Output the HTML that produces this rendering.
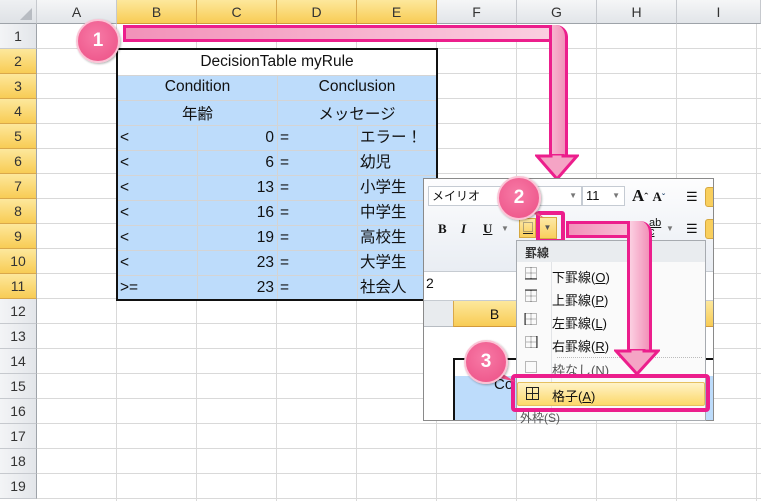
<!DOCTYPE html><html><head><meta charset="utf-8"><style>
*{margin:0;padding:0;box-sizing:border-box}
body{width:761px;height:501px;overflow:hidden;background:#fff;font-family:"Liberation Sans","Noto Sans CJK JP",sans-serif;position:relative;font-size:14px;color:#111}
.a{position:absolute}
.ch{position:absolute;top:0;height:24px;border-right:1px solid #c6c9ce;border-bottom:1px solid #9ea3a9;background:linear-gradient(#f5f6f7,#e2e5e9);text-align:center;line-height:24px;font-size:14px;color:#333}
.ch.s{background:linear-gradient(#fde89c,#f8cc55);border-right-color:#d9a84b;border-bottom-color:#d29a3c}
.rh{position:absolute;left:0;width:37px;height:25px;border-bottom:1px solid #c6c9ce;border-right:1px solid #9ea3a9;background:linear-gradient(90deg,#f3f4f6,#e3e6ea);text-align:center;line-height:24px;font-size:14px;color:#333}
.rh.s{background:linear-gradient(#fde89c,#f8cc55);border-bottom-color:#d9a84b}
.badge{position:absolute;width:44px;height:44px;border-radius:50%;background:radial-gradient(circle at 45% 40%,#f77aa6,#ec4f85);border:2px solid #fbc4d6;color:#fff;font-weight:bold;font-size:19px;text-align:center;line-height:40px;box-shadow:1px 1px 2px rgba(0,0,0,.3)}
.bar{position:absolute;background:linear-gradient(90deg,#f291b9,#fbd0e1);border:3px solid #ec1e8c}
.mi{position:absolute;left:552px;font-size:13px}
.t{font-size:15.5px}
</style></head><body>
<div class="a" style="left:37px;top:24px;width:724px;height:477px;background-image:linear-gradient(90deg,#d9d9d9 1px,transparent 1px),linear-gradient(#d9d9d9 1px,transparent 1px);background-size:80px 25px;background-position:79px 0,0 24px"></div>
<div class="ch" style="left:0;width:37px;background:linear-gradient(#eef0f2,#dfe2e6)"></div>
<div class="a" style="left:20px;top:8px;width:0;height:0;border-left:12px solid transparent;border-bottom:12px solid #b8bcc2"></div>
<div class="ch" style="left:37px;width:80px">A</div>
<div class="ch s" style="left:117px;width:80px">B</div>
<div class="ch s" style="left:197px;width:80px">C</div>
<div class="ch s" style="left:277px;width:80px">D</div>
<div class="ch s" style="left:357px;width:80px">E</div>
<div class="ch" style="left:437px;width:80px">F</div>
<div class="ch" style="left:517px;width:80px">G</div>
<div class="ch" style="left:597px;width:80px">H</div>
<div class="ch" style="left:677px;width:84px">I</div>
<div class="rh" style="top:24px">1</div><div class="rh s" style="top:49px">2</div><div class="rh s" style="top:74px">3</div><div class="rh s" style="top:99px">4</div><div class="rh s" style="top:124px">5</div><div class="rh s" style="top:149px">6</div><div class="rh s" style="top:174px">7</div><div class="rh s" style="top:199px">8</div><div class="rh s" style="top:224px">9</div><div class="rh s" style="top:249px">10</div><div class="rh s" style="top:274px">11</div><div class="rh" style="top:299px">12</div><div class="rh" style="top:324px">13</div><div class="rh" style="top:349px">14</div><div class="rh" style="top:374px">15</div><div class="rh" style="top:399px">16</div><div class="rh" style="top:424px">17</div><div class="rh" style="top:449px">18</div><div class="rh" style="top:474px">19</div>
<div class="a t" style="left:116px;top:48px;width:322px;height:253px;border:2px solid #111;background:#fff">
<div class="a" style="left:0;top:25px;width:318px;height:224px;background:#bddcfb;background-image:linear-gradient(#d4d4d4 1px,transparent 1px);background-size:100% 25px"></div>
<div class="a" style="left:159px;top:25px;width:1px;height:50px;background:#d4d4d4"></div>
<div class="a" style="left:79px;top:75px;width:1px;height:174px;background:#d4d4d4"></div>
<div class="a" style="left:159px;top:75px;width:1px;height:174px;background:#d4d4d4"></div>
<div class="a" style="left:239px;top:75px;width:1px;height:174px;background:#d4d4d4"></div>
<div class="a" style="left:0;top:3px;width:318px;text-align:center">DecisionTable myRule</div>
<div class="a" style="left:0;top:28px;width:159px;text-align:center">Condition</div>
<div class="a" style="left:160px;top:28px;width:158px;text-align:center">Conclusion</div>
<div class="a" style="left:0;top:52px;width:159px;text-align:center">年齢</div>
<div class="a" style="left:160px;top:52px;width:158px;text-align:center">メッセージ</div>
</div>
<div class="a t" style="left:120px;top:125px;line-height:25px">&lt;<br>&lt;<br>&lt;<br>&lt;<br>&lt;<br>&lt;<br>&gt;=</div>
<div class="a t" style="left:200px;top:125px;width:74px;text-align:right;line-height:25px">0<br>6<br>13<br>16<br>19<br>23<br>23</div>
<div class="a t" style="left:280px;top:125px;line-height:25px">=<br>=<br>=<br>=<br>=<br>=<br>=</div>
<div class="a t" style="left:360px;top:125px;line-height:25px">エラー！<br>幼児<br>小学生<br>中学生<br>高校生<br>大学生<br>社会人</div>
<div class="bar" style="left:123px;top:25px;width:445px;height:17px;border-radius:0 14px 0 0;border-right:none"></div>
<div class="bar" style="left:549px;top:25px;width:19px;height:134px;border-top:none;border-radius:0 12px 0 0;background:linear-gradient(90deg,#f7b4cf,#f291b9)"></div>
<svg class="a" style="left:535px;top:154px" width="44" height="28"><polygon points="2,2 16,2 16,0 28,0 28,2 42,2 22,25" fill="#f5a4c5" stroke="#ec1e8c" stroke-width="3"/></svg>
<div class="a" style="left:423px;top:178px;width:291px;height:243px;background:#fff;border:1px solid #8a8a8a;overflow:hidden">
 <div class="a" style="left:0;top:0;width:291px;height:92px;background:linear-gradient(#fdfdfe,#e9edf3)"></div>
 <div class="a" style="left:4px;top:7px;width:154px;height:20px;background:#fff;border:1px solid #c5cbd3;font-size:12px;line-height:18px;padding-left:3px">メイリオ<span style="position:absolute;right:4px;color:#777;font-size:8px">▼</span></div>
 <div class="a" style="left:158px;top:7px;width:43px;height:20px;background:#fff;border:1px solid #c5cbd3;font-size:13px;line-height:18px;padding-left:3px">11<span style="position:absolute;right:4px;color:#777;font-size:8px">▼</span></div>
 <div class="a" style="left:208px;top:7px;font-family:'Liberation Serif',serif;font-weight:bold;font-size:17px">A<span style="font-size:12px">ˆ</span> <span style="font-size:13px">A</span><span style="font-size:10px;color:#357">ˇ</span></div>
 <div class="a" style="left:14px;top:42px;font-family:'Liberation Serif',serif;font-weight:bold;font-size:13px">B</div>
 <div class="a" style="left:37px;top:42px;font-family:'Liberation Serif',serif;font-style:italic;font-weight:bold;font-size:13px">I</div>
 <div class="a" style="left:59px;top:42px;font-family:'Liberation Serif',serif;font-weight:bold;font-size:13px;text-decoration:underline">U</div>
 <div class="a" style="left:77px;top:45px;font-size:8px;color:#777">▼</div>
 <div class="a" style="left:95px;top:39px;width:17px;height:20px;background:linear-gradient(#fde9a6,#f9cf5d);border:1px solid #d6a840"></div>
 <svg class="a" style="left:98px;top:42px" width="12" height="14" fill="none" stroke="#666" stroke-dasharray="1 1"><rect x="1.5" y="1.5" width="9" height="9"/><line x1="1" y1="12.5" x2="11" y2="12.5" stroke="#222" stroke-dasharray="none"/></svg>
 <div class="a" style="left:114px;top:38px;width:19px;height:22px;background:linear-gradient(#fde9a6,#f9cf5d);border:1px solid #d6a840;font-size:8px;text-align:center;line-height:20px;color:#555">▼</div>
 <div class="a" style="left:112px;top:32px;width:29px;height:32px;border:4px solid #ec1e8c;border-radius:3px"></div>
 <div class="a" style="left:225px;top:40px;font-size:11px;line-height:9px;text-decoration:underline">ab<br>c</div><div class="a" style="left:242px;top:45px;font-size:8px;color:#777">▼</div>
 <div class="a" style="left:262px;top:10px;font-size:13px">☰</div><div class="a" style="left:262px;top:42px;font-size:13px">☰</div>
 <div class="a" style="left:281px;top:8px;width:12px;height:20px;background:#f9cf5d;border:1px solid #d6a840;border-radius:3px"></div>
 <div class="a" style="left:281px;top:40px;width:12px;height:20px;background:#f9cf5d;border:1px solid #d6a840;border-radius:3px"></div>
 <div class="a" style="left:0;top:92px;width:291px;height:30px;background:#fff;border-top:1px solid #c6cbd1;border-bottom:1px solid #c6cbd1"></div>
 <div class="a" style="left:2px;top:96px;font-size:14px">2</div>
 <div class="a" style="left:0;top:122px;width:291px;height:26px;background:#e8ebee;border-bottom:1px solid #b7bcc2"></div>
 <div class="a" style="left:29px;top:122px;width:262px;height:26px;background:linear-gradient(#fde89c,#f8cc55);border-left:1px solid #d9a84b;border-bottom:1px solid #d29a3c;text-align:center;line-height:26px;padding-right:180px">B</div>
 <div class="a" style="left:29px;top:179px;width:262px;height:70px;border:2px solid #111;border-right:none;background:#fff"></div>
 <div class="a" style="left:31px;top:197px;width:262px;height:50px;background:#bddcfb"></div>
 <div class="a" style="left:70px;top:197px;font-size:15px">Co</div>
</div>
<div class="a" style="left:516px;top:240px;width:190px;height:181px;background:#fafafa;border:1px solid #a7abb0;overflow:hidden">
 <div class="a" style="left:0;top:0;width:190px;height:21px;background:#e9ecef;font-size:12px;font-weight:bold;padding:3px 0 0 8px;color:#333">罫線</div>
 <div class="a" style="left:34px;top:21px;width:1px;height:160px;background:#e2e4e7"></div>
 <div class="a" style="left:40px;top:116px;width:145px;border-top:1px dotted #bbb"></div>
</div>
<svg class="a" style="left:524px;top:266px" width="16" height="150" fill="none" stroke="#777" stroke-dasharray="1 1">
 <rect x="1.5" y="1.5" width="11" height="11"/><line x1="1.5" y1="7" x2="12.5" y2="7"/><line x1="7" y1="1.5" x2="7" y2="12.5"/><line x1="1" y1="13" x2="13" y2="13" stroke="#222" stroke-dasharray="none"/>
 <rect x="1.5" y="24.5" width="11" height="11"/><line x1="1.5" y1="30" x2="12.5" y2="30"/><line x1="7" y1="24.5" x2="7" y2="35.5"/><line x1="1" y1="24" x2="13" y2="24" stroke="#222" stroke-dasharray="none"/>
 <rect x="1.5" y="47.5" width="11" height="11"/><line x1="1.5" y1="53" x2="12.5" y2="53"/><line x1="7" y1="47.5" x2="7" y2="58.5"/><line x1="1" y1="47" x2="1" y2="59" stroke="#222" stroke-dasharray="none"/>
 <rect x="1.5" y="70.5" width="11" height="11"/><line x1="1.5" y1="76" x2="12.5" y2="76"/><line x1="7" y1="70.5" x2="7" y2="81.5"/><line x1="13" y1="70" x2="13" y2="82" stroke="#222" stroke-dasharray="none"/>
 <rect x="1.5" y="95.5" width="11" height="11"/>
</svg>
<div class="mi" style="top:267px">下罫線(<u>O</u>)</div>
<div class="mi" style="top:290px">上罫線(<u>P</u>)</div>
<div class="mi" style="top:313px">左罫線(<u>L</u>)</div>
<div class="mi" style="top:336px">右罫線(<u>R</u>)</div>
<div class="mi" style="top:360px;color:#555">枠なし(N)</div>
<div class="a" style="left:517px;top:382px;width:188px;height:24px;background:linear-gradient(#fff3c8,#fcd86a);border:1px solid #e5c060;border-radius:2px"></div>
<svg class="a" style="left:525px;top:386px" width="16" height="16" fill="none" stroke="#222"><rect x="1.5" y="1.5" width="12" height="12"/><line x1="7.5" y1="1" x2="7.5" y2="14"/><line x1="1" y1="7.5" x2="14" y2="7.5"/></svg>
<div class="mi" style="top:386px">格子(<u>A</u>)</div>
<div class="a" style="left:511px;top:374px;width:199px;height:38px;border:4px solid #ec1e8c;border-radius:4px"></div>
<div class="a" style="left:520px;top:409px;font-size:12px;color:#555">外枠(S)</div>
<div class="bar" style="left:566px;top:221px;width:86px;height:17px;border-radius:0 14px 0 0;border-right:none"></div>
<div class="bar" style="left:627px;top:221px;width:25px;height:134px;border-top:none;border-radius:0 12px 0 0;background:linear-gradient(90deg,#fbd0e1,#f291b9)"></div>
<svg class="a" style="left:614px;top:349px" width="46" height="28"><polygon points="2,2 16,2 16,0 30,0 30,2 44,2 23,25" fill="#f5a4c5" stroke="#ec1e8c" stroke-width="3"/></svg>
<svg class="a" style="left:110px;top:48px" width="30" height="20"><polygon points="0,0 18,12 6,4" fill="#ec4f85"/></svg>
<div class="badge" style="left:76px;top:19px">1</div>
<svg class="a" style="left:530px;top:206px" width="20" height="20"><polygon points="0,0 14,12 4,8" fill="#ec4f85"/></svg>
<div class="badge" style="left:497px;top:176px">2</div>
<svg class="a" style="left:496px;top:370px" width="24" height="20"><polygon points="0,0 20,12 4,8" fill="#ec4f85"/></svg>
<div class="badge" style="left:464px;top:340px">3</div>
</body></html>
